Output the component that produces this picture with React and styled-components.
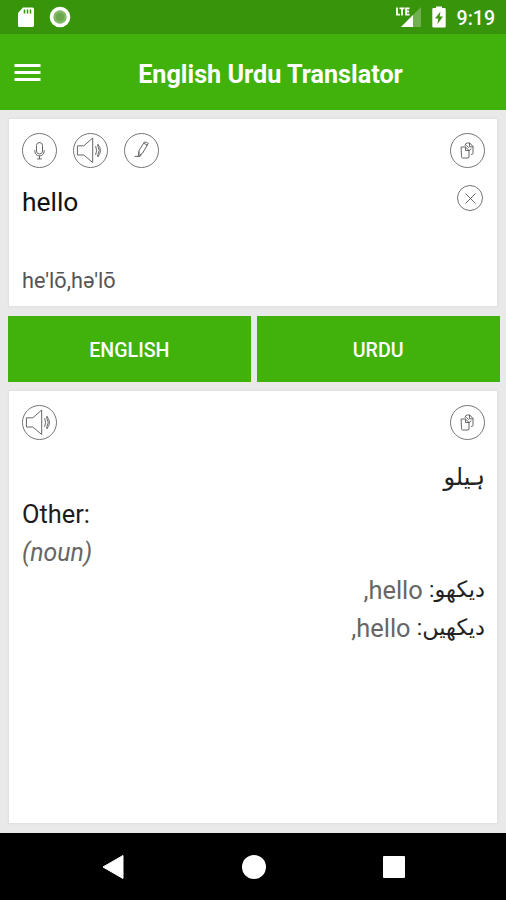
import React, { useState } from "react";
import styled, { createGlobalStyle } from "styled-components";

const GlobalStyle = createGlobalStyle`
  * {
    box-sizing: border-box;
  }
  body {
    margin: 0;
    background-color: #e9e9e9;
    font-family: Roboto, "DejaVu Sans", sans-serif;
  }
  button {
    padding: 0;
    border: none;
    background: none;
    font-family: inherit;
  }
  svg {
    display: block;
  }
`;

const Screen = styled.div`
  display: flex;
  flex-direction: column;
  width: 100%;
  height: 100vh;
  overflow: hidden;
`;

const StatusBar = styled.div`
  display: flex;
  align-items: center;
  height: 34px;
  padding: 0 11px 0 17px;
  background-color: #38940a;
  color: white;
`;

const StatusGroup = styled.div`
  display: flex;
  align-items: center;
  gap: ${props => props.$gap}px;
  &:last-child {
    margin-left: auto;
  }
`;

const Clock = styled.span`
  font-size: 19.5px;
  font-weight: 500;
  line-height: 34px;
  padding-top: 3px;
`;

const AppBar = styled.header`
  display: grid;
  grid-template-columns: 56px 1fr 21px;
  align-items: center;
  height: 76px;
  background-color: #41b20b;
`;

const MenuButton = styled.button`
  padding-left: 14px;
`;

const Title = styled.h1`
  margin: 0;
  padding-top: 5px;
  color: white;
  font-size: 25.2px;
  font-weight: 700;
  text-align: center;
  white-space: nowrap;
`;

const Main = styled.main`
  display: flex;
  flex-direction: column;
  flex: 1;
  gap: 9px;
  padding: 9px 9px 10px;
`;

const Card = styled.section`
  display: flex;
  flex-direction: column;
  flex: ${props => props.$height ? `0 0 ${props.$height}px` : "1"};
  padding: 14px 12px 0 13px;
  background-color: white;
  box-shadow: 0 0 2px 1px #dfdfdf;
`;

const Row = styled.div`
  display: flex;
  align-items: flex-start;
  justify-content: space-between;
`;

const Tools = styled.div`
  display: flex;
  gap: 16px;
`;

const RoundButton = styled.button`
  display: flex;
  align-items: center;
  justify-content: center;
  width: ${props => props.$size || 35}px;
  height: ${props => props.$size || 35}px;
  border: 1px solid #757575;
  border-radius: 50%;
`;

const SourceRow = styled(Row)`
  height: 94px;
  padding-top: 17px;
  padding-right: 2px;
`;

const SourceText = styled.div`
  color: #111;
  font-size: 26.4px;
  line-height: 35px;
`;

const Phonetic = styled.div`
  color: #555;
  font-size: 21.7px;
  line-height: 30px;
  padding-top: 4px;
`;

const Languages = styled.div`
  display: flex;
  gap: 6px;
  height: 66px;
  margin: 1px -2.5px 0 -1px;
`;

const LanguageButton = styled.button`
  flex: 1;
  padding-top: 3px;
  background-color: #41b20b;
  color: white;
  font-size: 19.6px;
  font-weight: 500;
`;

const Result = styled.div`
  padding-top: 17px;
  font-size: 25.4px;
  line-height: 38px;
`;

const Line = styled.div`
  height: 38px;
  color: ${props => props.$muted ? "#666" : "#1c1c1c"};
  font-size: ${props => props.$italic ? 24.8 : 25.4}px;
  font-style: ${props => props.$italic ? "italic" : "normal"};
  line-height: ${props => props.$italic ? 40 : 38}px;
  white-space: nowrap;
`;

const Urdu = styled.span`
  color: #222;
  font-family: Roboto, "DejaVu Sans", sans-serif;
  font-size: ${props => props.$size || 22}px;
  line-height: 1;
  vertical-align: ${props => props.$raise || 0}px;
`;

const NavBar = styled.nav`
  display: flex;
  align-items: center;
  justify-content: space-between;
  height: 67px;
  padding: 0 101px;
  background-color: black;
`;

const SdCardIcon = () => (
  <svg width="18" height="21" viewBox="0 0 18 21">
    <path d="M6 .5h9.500A1.500 1.500 0 0 1 17 2v16.500a1.500 1.500 0 0 1-1.500 1.500h-13A1.500 1.500 0 0 1 1 18.500V6z" fill="#fff" />
    <path d="M7.500 2.500v4M10.500 2.500v4M13.500 2.500v4" stroke="#38940a" strokeWidth="1.500" />
  </svg>
);

const RecordIcon = () => (
  <svg width="22" height="22" viewBox="0 0 22 22">
    <circle cx="11" cy="11" r="10.300" fill="#fff" />
    <circle cx="11" cy="11" r="6.700" fill="#82b966" />
    <circle cx="11" cy="11" r="4" fill="#6aa64b" />
  </svg>
);

const SignalIcon = () => (
  <svg width="27" height="21" viewBox="0 0 27 21">
    <path d="M26 0v20H6z" fill="#71b052" />
    <path d="M18 8v12H6z" fill="#fff" />
    <path d="M2 .5v7.200h3M4.500 1.400h5M7 1.400v7M14.500 1.400h-3.400v6.200h3.400M11.100 4.500h3" fill="none" stroke="#fff" strokeWidth="1.800" />
  </svg>
);

const BatteryIcon = () => (
  <svg width="14" height="22" viewBox="0 0 14 22">
    <path d="M4 2V.5h6V2h2.500a1.200 1.200 0 0 1 1.200 1.200v17a1.200 1.200 0 0 1-1.200 1.200h-11A1.200 1.200 0 0 1 .3 20.200v-17A1.200 1.200 0 0 1 1.500 2z" fill="#fff" />
    <path d="M8.500 5.500 3 12.500h3.300L5.500 18 11 10.500H7.600z" fill="#38940a" />
  </svg>
);

const MenuIcon = () => (
  <svg width="27" height="20" viewBox="0 0 27 20">
    <path d="M.5 3.500h26M.5 10.500h26M.5 17.500h26" stroke="#fff" strokeWidth="3.200" />
  </svg>
);

const lineProps = {
  fill: "none",
  stroke: "#666",
  strokeWidth: 1,
  strokeLinejoin: "round",
  strokeLinecap: "round"
};

const MicIcon = () => (
  <svg width="33" height="33" viewBox="0 0 33 33" {...lineProps}>
    <rect x="13.500" y="8.500" width="6" height="11.500" rx="3" />
    <path d="M11.800 16.500v.8a4.700 4.700 0 0 0 9.400 0v-.8M16.500 22v2.800M14.500 24.900h4" />
  </svg>
);

const SpeakerIcon = () => (
  <svg width="33" height="33" viewBox="0 0 33 33" {...lineProps}>
    <path d="M3.800 11.800h6L18.700 4v24.500L9.800 21H3.800z" />
    <path d="M21.800 12.500q1.800 4 0 8M24 10.500q5.200 6 0 12M24 10.500q-1 1 0 2.200 2.500 3.800 0 7.600-1 1.200 0 2.200" />
  </svg>
);

const PenIcon = () => (
  <svg width="33" height="33" viewBox="0 0 33 33" {...lineProps}>
    <path d="M18.500 9.500 14 16.500l-.3 5.300 4-2.800 4.300-7.500zM18.500 9.500l.8-1.300q2-.5 4 1.200L22 11.500M14 18l-.8 4.500M10 22.400h5.200l1-1.500" />
  </svg>
);

const CopyIcon = () => (
  <svg width="33" height="33" viewBox="0 0 33 33" {...lineProps}>
    <path d="M10.500 13h4l3.500 3.500v6.500a1 1 0 0 1-1 1h-5.500a1 1 0 0 1-1-1z" />
    <path d="M14 11.500q.3-2.500 2.500-2.500h2.300l3.200 3.500v7q0 1-1.500 1M18.500 9.200v3.600H22M15.500 11.500l2 2M14.500 13.200v3.300H18M20 15l-2 1.500" />
  </svg>
);

const ClearIcon = () => (
  <svg width="11" height="11" viewBox="0 0 11 11" {...lineProps}>
    <path d="m.8.8 9.400 9.400M10.200.8.8 10.200" />
  </svg>
);

const meanings = ["دیکھو", "دیکھیں"];

const App = () => {
  const [word, setWord] = useState("hello");
  const onClearClick = () => {
    setWord("");
  }
  return (
    <>
      <GlobalStyle />
      <Screen>
        <StatusBar>
          <StatusGroup $gap={14}>
            <SdCardIcon />
            <RecordIcon />
          </StatusGroup>
          <StatusGroup $gap={10.5}>
            <SignalIcon />
            <BatteryIcon />
            <Clock>9:19</Clock>
          </StatusGroup>
        </StatusBar>
        <AppBar>
          <MenuButton aria-label="Menu"><MenuIcon /></MenuButton>
          <Title>English Urdu Translator</Title>
        </AppBar>
        <Main>
          <Card $height={187}>
            <Row>
              <Tools>
                <RoundButton aria-label="Speak"><MicIcon /></RoundButton>
                <RoundButton aria-label="Listen"><SpeakerIcon /></RoundButton>
                <RoundButton aria-label="Write"><PenIcon /></RoundButton>
              </Tools>
              <RoundButton aria-label="Copy"><CopyIcon /></RoundButton>
            </Row>
            <SourceRow>
              <SourceText>{word}</SourceText>
              <RoundButton $size={26} onClick={onClearClick} aria-label="Clear"><ClearIcon /></RoundButton>
            </SourceRow>
            <Phonetic>he'lō,hə'lō</Phonetic>
          </Card>
          <Languages>
            <LanguageButton>ENGLISH</LanguageButton>
            <LanguageButton>URDU</LanguageButton>
          </Languages>
          <Card>
            <Row>
              <RoundButton aria-label="Listen"><SpeakerIcon /></RoundButton>
              <RoundButton aria-label="Copy"><CopyIcon /></RoundButton>
            </Row>
            <Result>
              <Line dir="rtl"><Urdu $size={24}>ہیلو</Urdu></Line>
              <Line>Other:</Line>
              <Line $muted $italic>(noun)</Line>
              {meanings.map(meaning =>
                <Line key={meaning} dir="rtl" $muted><Urdu $size={22.4} $raise={2}>{meaning}:</Urdu> hello,</Line>
              )}
            </Result>
          </Card>
        </Main>
        <NavBar>
          <svg width="24" height="26" viewBox="0 0 24 26"><path d="M22 1.500v23L2 13z" fill="#fff" stroke="#fff" strokeLinejoin="round" /></svg>
          <svg width="24" height="24" viewBox="0 0 24 24"><circle cx="12" cy="12" r="12" fill="#fff" /></svg>
          <svg width="22" height="22" viewBox="0 0 22 22"><rect width="22" height="22" rx="1" fill="#fff" /></svg>
        </NavBar>
      </Screen>
    </>
  );
};

export default App;
